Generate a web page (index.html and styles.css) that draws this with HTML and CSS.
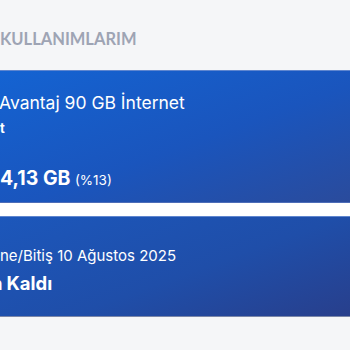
FILE: index.html
```html
<!DOCTYPE html>
<html lang="tr">
<head>
<meta charset="utf-8">
<link rel="stylesheet" href="styles.css">
</head>
<body>
<div class="page">
  <div class="head">
    <h2 class="title">KULLANIMLARIM</h2>
  </div>
  <div class="list">
    <div class="card card-usage">
      <div class="pkg">Avantaj 90 GB İnternet</div>
      <div class="sub">t</div>
      <div class="amount"><span class="big">4,13 GB</span> <span class="pct">(%13)</span></div>
    </div>
    <div class="card card-date">
      <div class="end">ne/Bitiş 10 Ağustos 2025</div>
      <div class="left"><span class="cut">n</span>Kaldı</div>
    </div>
  </div>
</div>
</body>
</html>
```
FILE: styles.css
```css
html, body {
  margin: 0;
  padding: 0;
  background: #f5f6f8;
  overflow: hidden;
}
.page {
  width: 350px;
  height: 350px;
  font-family: "Inter", "Open Sans", sans-serif;
  color: #fff;
}
.head {
  height: 70px;
  display: flex;
  align-items: flex-start;
}
.title {
  margin: 29px 0 0 0;
  font-family: "Lato", sans-serif;
  font-size: 16.5px;
  font-weight: 700;
  color: #9ea4b4;
  line-height: 20px;
}
.list {
  background: #fff;
  display: flex;
  flex-direction: column;
  gap: 13px;
}
.card {
  box-sizing: border-box;
  border-top: 1px solid #5f86cf;
  border-bottom: 1px solid #4d6db8;
}
.card-usage {
  height: 133px;
  background: linear-gradient(160deg, #1463d2 0%, #1a55bd 55%, #2a4b9c 100%);
  padding-top: 21px;
}
.card-date {
  height: 101px;
  background: linear-gradient(160deg, #1c57bb 0%, #1f4ea9 55%, #283f8c 100%);
  padding-top: 29px;
  border-bottom-color: #7a86a8;
}
.pkg {
  font-size: 17.5px;
  font-weight: 400;
  line-height: 22px;
  margin-left: -1px;
}
.sub {
  font-size: 13px;
  font-weight: 700;
  line-height: 16px;
  margin-top: 6px;
}
.amount {
  margin-top: 30px;
  line-height: 24px;
}
.big {
  font-size: 19.5px;
  font-weight: 700;
}
.pct {
  font-size: 13.5px;
  font-weight: 400;
}
.end {
  font-size: 15px;
  line-height: 20px;
}
.left {
  font-size: 18.5px;
  font-weight: 700;
  line-height: 24px;
  margin-top: 5px;
}
.cut {
  margin-left: -9px;
  margin-right: 4px;
}
```
